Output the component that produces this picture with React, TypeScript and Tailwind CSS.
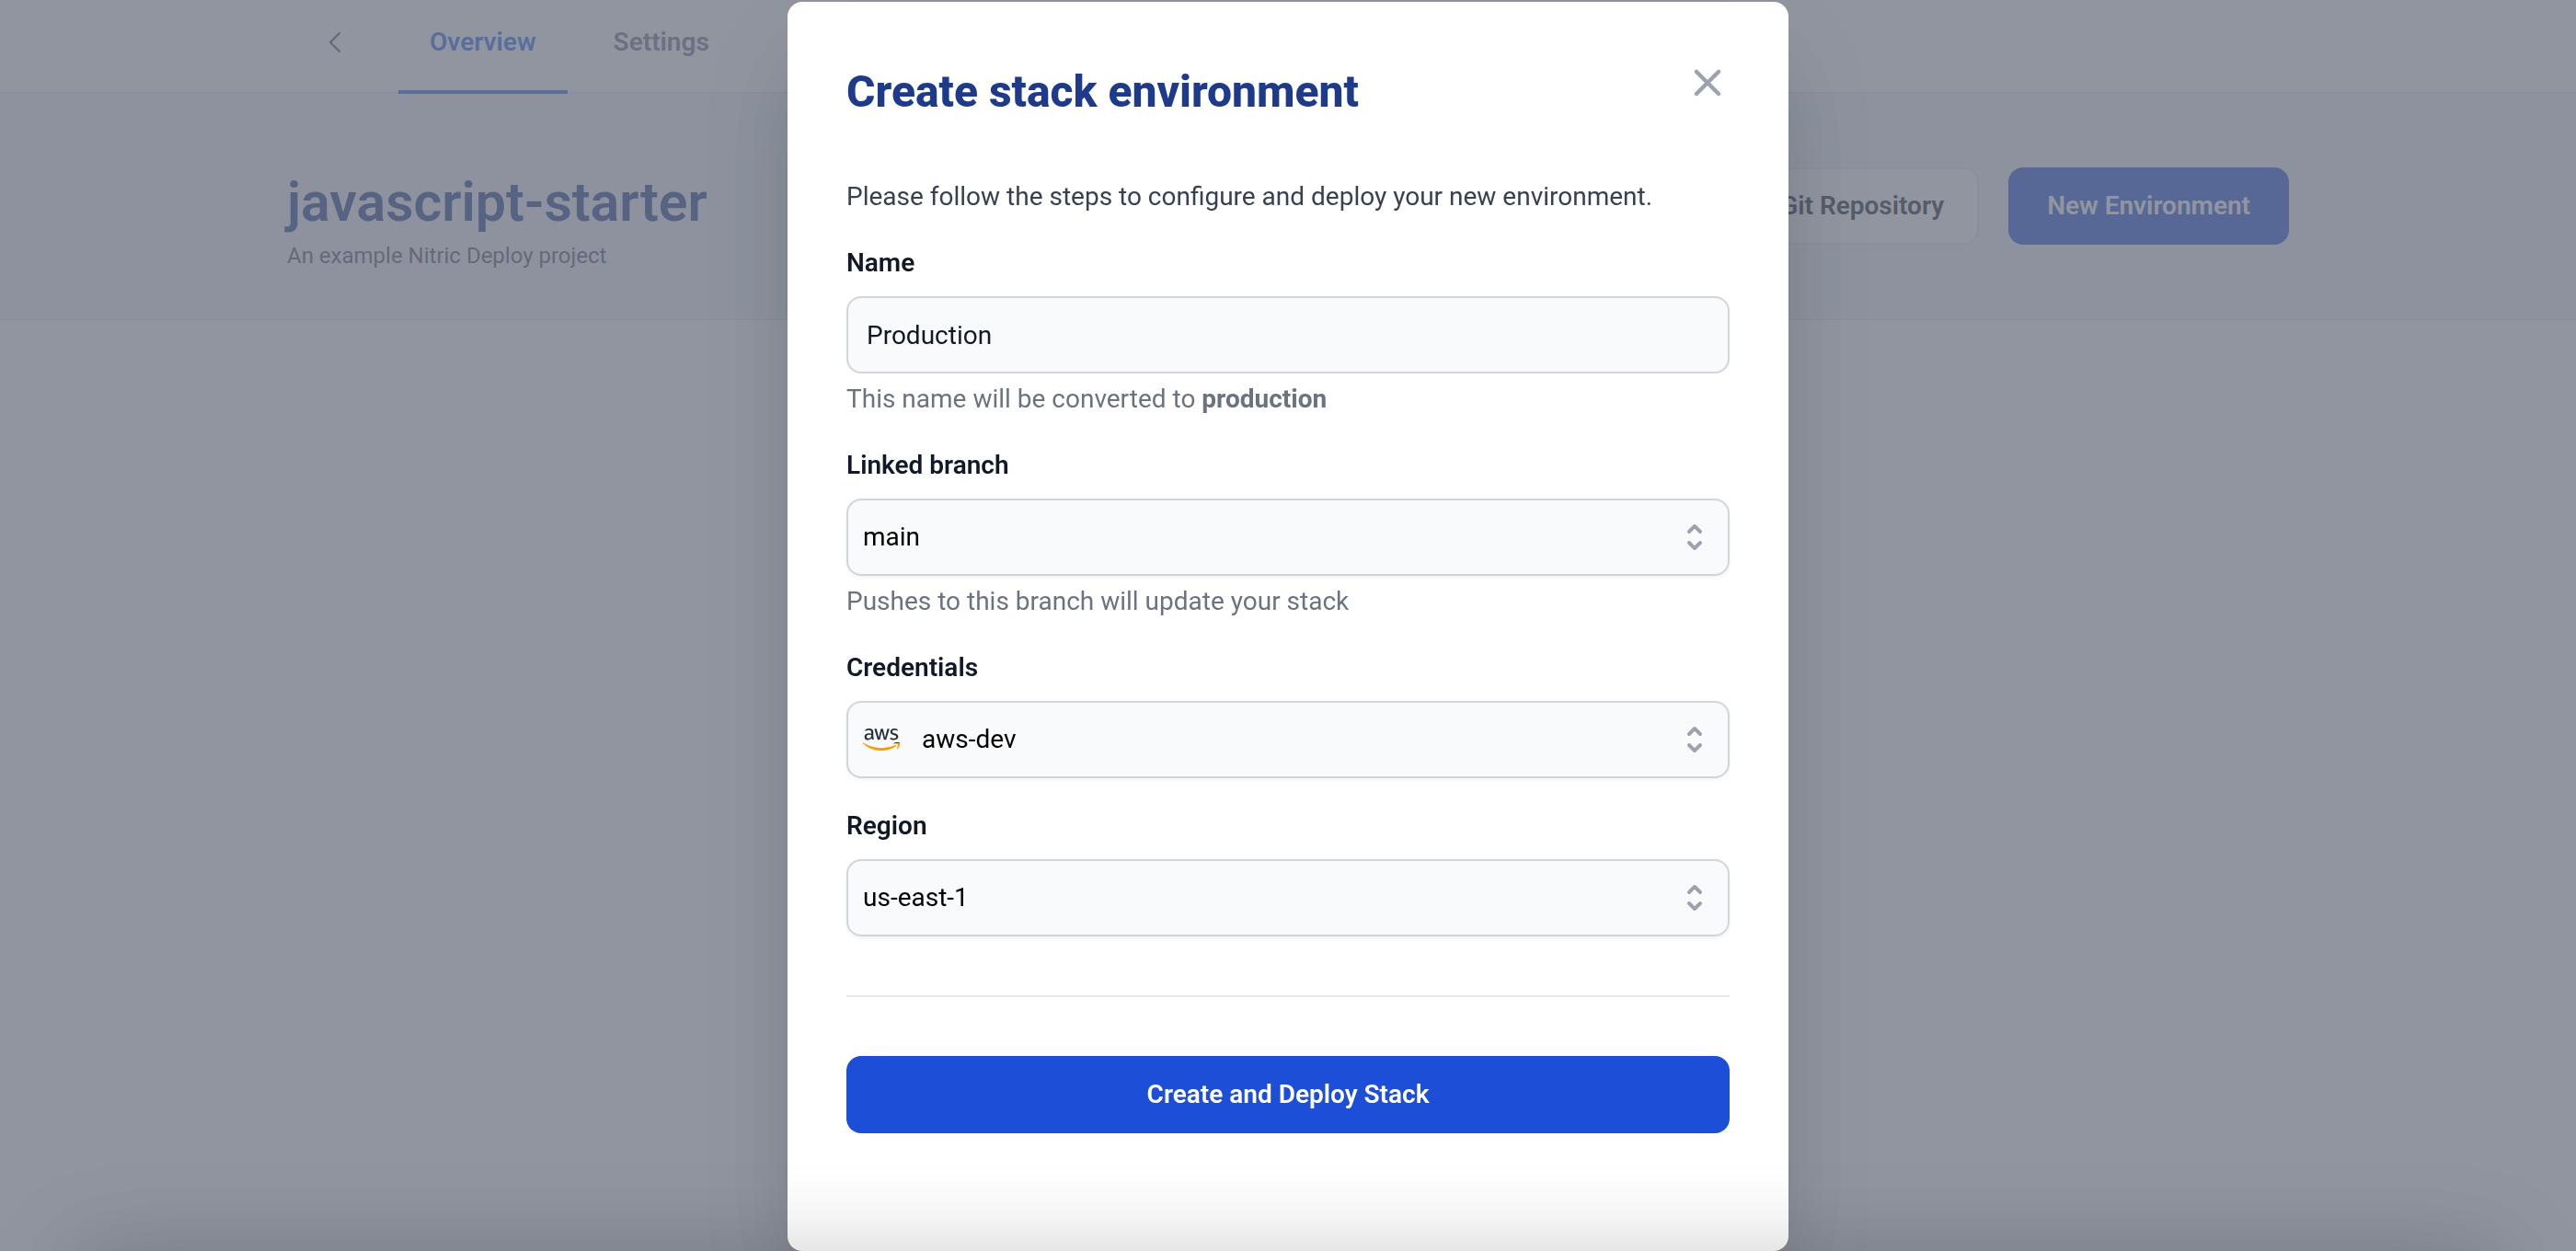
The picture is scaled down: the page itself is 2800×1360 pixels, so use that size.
import type { ReactNode } from "react";
import { FaAws } from "react-icons/fa";

function ChevronLeftIcon() {
  return (
    <svg className="size-8" viewBox="0 0 24 24" fill="none" stroke="currentColor" strokeWidth={1.75} aria-hidden="true">
      <path strokeLinecap="round" strokeLinejoin="round" d="M15.75 19.5L8.25 12l7.5-7.5" />
    </svg>
  );
}

function CloseIcon() {
  return (
    <svg className="size-12" viewBox="0 0 24 24" fill="none" stroke="currentColor" strokeWidth={2.25} aria-hidden="true">
      <path strokeLinecap="round" strokeLinejoin="round" d="M6 18L18 6M6 6l12 12" />
    </svg>
  );
}

function SelectorIcon() {
  return (
    <svg
      className="pointer-events-none absolute inset-y-0 right-[18px] my-auto size-10 text-[#9ca3af]"
      viewBox="0 0 20 20"
      fill="currentColor"
      aria-hidden="true"
    >
      <path
        fillRule="evenodd"
        clipRule="evenodd"
        d="M10 3a1 1 0 01.707.293l3 3a1 1 0 01-1.414 1.414L10 5.414 7.707 7.707a1 1 0 01-1.414-1.414l3-3A1 1 0 0110 3zm-3.707 9.293a1 1 0 011.414 0L10 14.586l2.293-2.293a1 1 0 011.414 1.414l-3 3a1 1 0 01-1.414 0l-3-3a1 1 0 010-1.414z"
      />
    </svg>
  );
}

function AwsLogo() {
  return (
    <span className="pointer-events-none absolute inset-y-0 left-[18px] flex items-center" aria-hidden="true">
      <svg className="size-0">
        <defs>
          <linearGradient id="aws-colors" gradientUnits="userSpaceOnUse" x1="0" y1="0" x2="0" y2="512">
            <stop offset="0.62" stopColor="#252f3e" />
            <stop offset="0.62" stopColor="#ff9900" />
          </linearGradient>
        </defs>
      </svg>
      <FaAws className="h-8 w-10" fill="url(#aws-colors)" />
    </span>
  );
}

function Field({ id, label, hint, children }: { id: string; label: string; hint?: ReactNode; children: ReactNode }) {
  return (
    <div className="flex flex-col">
      <label htmlFor={id} className="self-start font-semibold text-[#111827]">
        {label}
      </label>
      <div className="relative mt-4">{children}</div>
      {hint && <p className="mt-2 text-[#6b7280]">{hint}</p>}
    </div>
  );
}

const selectClass =
  "block h-[84px] w-full appearance-none rounded-2xl border-2 border-[#d1d5db] bg-[#f9fafb] pr-16 text-black shadow-[0_2px_4px_rgba(0,0,0,0.05)]";

export default function App() {
  return (
    <div className="relative min-h-screen overflow-hidden bg-white font-['Roboto',sans-serif] text-[28px] leading-10">
      <header className="h-[102px] border-b-2 border-[#e5e7eb] bg-white">
        <nav className="mx-auto flex h-full max-w-[2176px] items-stretch">
          <a href="#back" aria-label="Back" className="mr-[53px] flex items-start pt-[30px] pl-9 text-[#4b5563]">
            <ChevronLeftIcon />
          </a>
          <a href="#overview" className="-mb-0.5 border-b-4 border-[#2563eb] px-[34px] pt-[26px] font-semibold text-[#2563eb]">
            Overview
          </a>
          <a href="#settings" className="ml-4 px-[34px] pt-[26px] font-semibold text-[#6b7280]">
            Settings
          </a>
        </nav>
      </header>

      <section className="border-b-2 border-[#e5e7eb] bg-[#f3f4f6]">
        <div className="mx-auto flex max-w-[2176px] items-start justify-between pt-20 pb-[52px]">
          <div>
            <h1 className="text-[59px] leading-[76px] font-semibold text-[#1e3a8a]">javascript-starter</h1>
            <p className="mt-1 text-2xl text-[#4b5563]">An example Nitric Deploy project</p>
          </div>
          <div className="flex gap-8">
            <button type="button" className="h-[84px] rounded-2xl border-2 border-[#e5e7eb] bg-white px-9 font-semibold text-[#111827]">
              Git Repository
            </button>
            <button type="button" className="h-[84px] rounded-2xl bg-[#1d4ed8] px-[42px] font-semibold text-white">
              New Environment
            </button>
          </div>
        </div>
      </section>

      <div className="fixed inset-0 bg-[#6b7280]/75" />

      <div className="fixed inset-0 flex items-start justify-center pt-0.5">
        <div
          role="dialog"
          aria-modal="true"
          aria-labelledby="dialog-title"
          className="w-full max-w-[1088px] rounded-2xl bg-white px-16 pt-16 pb-32 shadow-[0_50px_100px_-24px_rgba(0,0,0,0.25)]"
        >
          <div className="flex items-start justify-between">
            <h2 id="dialog-title" className="text-5xl leading-[68px] font-extrabold text-[#1e3a8a]">
              Create stack environment
            </h2>
            <button type="button" aria-label="Close" className="text-[#9ca3af]">
              <CloseIcon />
            </button>
          </div>

          <p className="mt-[60px] text-[#374151]">
            Please follow the steps to configure and deploy your new environment.
          </p>

          <form className="mt-8" onSubmit={(event) => event.preventDefault()}>
            <div className="flex flex-col gap-8">
              <Field
                id="name"
                label="Name"
                hint={
                  <>
                    This name will be converted to <strong className="font-bold">production</strong>
                  </>
                }
              >
                <input
                  id="name"
                  type="text"
                  defaultValue="Production"
                  className="block h-[84px] w-full rounded-2xl border-2 border-[#d1d5db] bg-[#f9fafb] px-5 text-[#111827]"
                />
              </Field>

              <Field id="branch" label="Linked branch" hint="Pushes to this branch will update your stack">
                <select id="branch" className={`${selectClass} pl-4`}>
                  <option>main</option>
                </select>
                <SelectorIcon />
              </Field>

              <Field id="credentials" label="Credentials">
                <select id="credentials" className={`${selectClass} pl-20`}>
                  <option>aws-dev</option>
                </select>
                <AwsLogo />
                <SelectorIcon />
              </Field>

              <Field id="region" label="Region">
                <select id="region" className={`${selectClass} pl-4`}>
                  <option>us-east-1</option>
                </select>
                <SelectorIcon />
              </Field>
            </div>

            <hr className="my-16 border-t-2 border-[#e5e7eb]" />

            <button type="submit" className="h-[84px] w-full rounded-2xl bg-[#1d4ed8] font-semibold text-white">
              Create and Deploy Stack
            </button>
          </form>
        </div>
      </div>

      <div className="pointer-events-none fixed inset-x-20 top-full h-24 shadow-[0_0_100px_rgba(0,0,0,0.2)]" />
    </div>
  );
}
